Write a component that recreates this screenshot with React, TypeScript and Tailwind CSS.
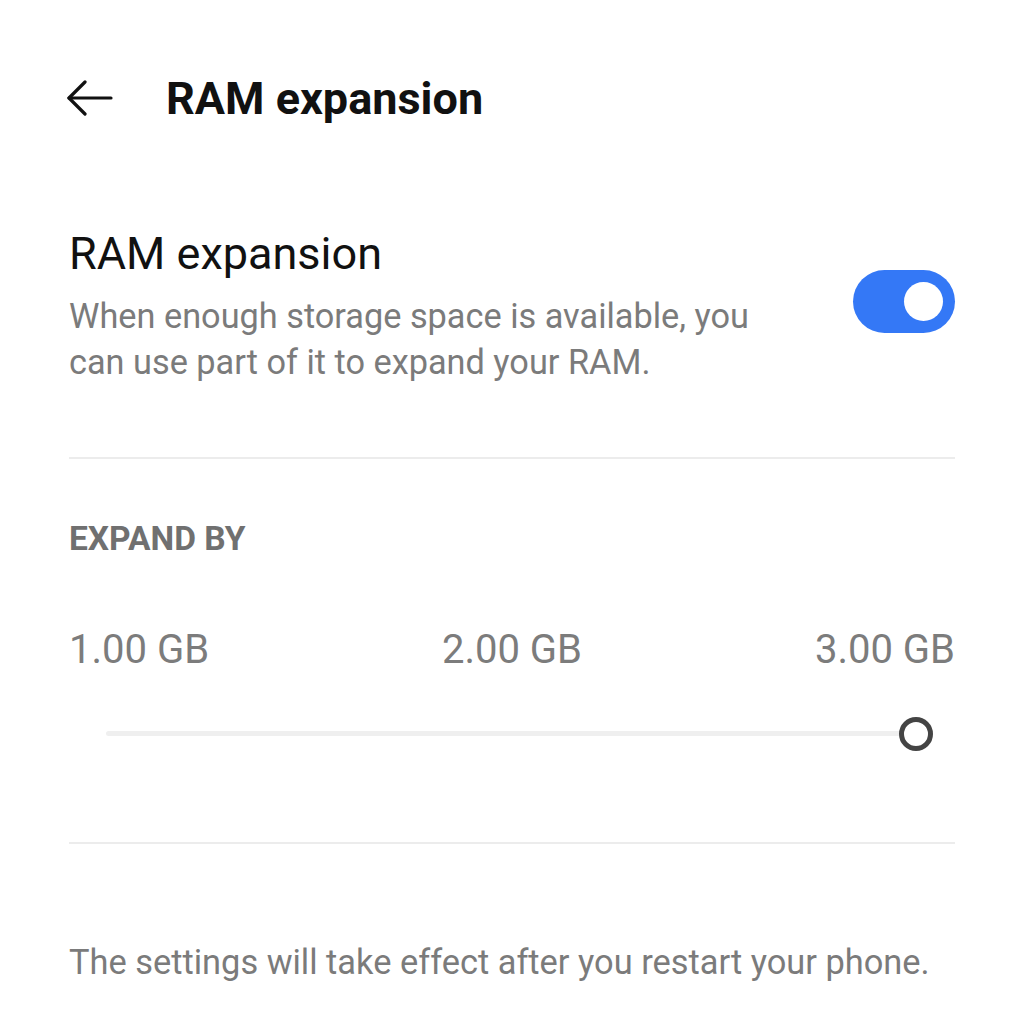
import React from 'react';

const App: React.FC = () => {
  return (
    <div className="w-[1024px] h-[1014px] bg-white overflow-hidden" style={{ fontFamily: 'Roboto, "Noto Sans", sans-serif' }}>
      {/* Top bar */}
      <div className="flex items-center h-[196px] pl-[66px]">
        <svg width="47" height="36" viewBox="0 0 47 36" fill="none" stroke="#111" strokeWidth="3.2" strokeLinecap="round" strokeLinejoin="round">
          <path d="M45 18H3" />
          <path d="M19 2L3 18L19 34" />
        </svg>
        <h1 className="ml-[53px] text-[45px] font-bold text-[#111] leading-none">RAM expansion</h1>
      </div>

      <div className="px-[69px]">
        {/* Toggle row */}
        <div className="flex items-start justify-between pt-[35px] pb-[72px] border-b-2 border-[#ececec]">
          <div>
            <div className="text-[45px] leading-none text-[#111]">RAM expansion</div>
            <p className="mt-[17px] text-[34.3px] leading-[46px] text-[#7b7b7b] w-[700px]">
              When enough storage space is available, you can use part of it to expand your RAM.
            </p>
          </div>
          <div className="mt-[39px] w-[102px] h-[63px] rounded-full bg-[#3478f6] flex items-center justify-end pr-[12px]">
            <div className="w-[39px] h-[39px] rounded-full bg-white" />
          </div>
        </div>

        {/* Expand by */}
        <div className="border-b-2 border-[#ececec] pt-[63px] pb-[91px]">
          <div className="text-[33.5px] font-bold text-[#707070] leading-none">EXPAND BY</div>
          <div className="mt-[74px] flex justify-between text-[40px] leading-none text-[#7c7c7c]">
            <span>1.00 GB</span>
            <span>2.00 GB</span>
            <span>3.00 GB</span>
          </div>
          <div className="relative mt-[47px] h-[34px] flex items-center pl-[37px] pr-[38px]">
            <div className="h-[5px] w-full bg-[#efefef] rounded-full" />
            <div className="absolute right-[22px] top-0 w-[34px] h-[34px] rounded-full border-[5px] border-[#444] bg-white" />
          </div>
        </div>

        <p className="mt-[101px] text-[34.4px] leading-none text-[#7b7b7b]">
          The settings will take effect after you restart your phone.
        </p>
      </div>
    </div>
  );
};

export default App;
